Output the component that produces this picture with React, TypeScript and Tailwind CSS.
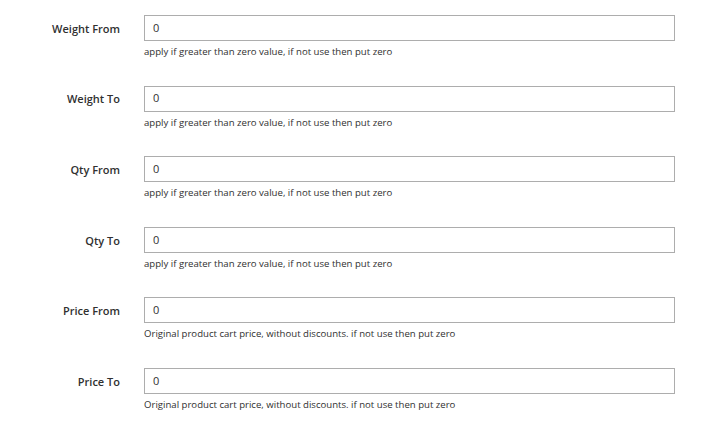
import React from "react";

const rows = [
  { label: "Weight From", note: "apply if greater than zero value, if not use then put zero" },
  { label: "Weight To", note: "apply if greater than zero value, if not use then put zero" },
  { label: "Qty From", note: "apply if greater than zero value, if not use then put zero" },
  { label: "Qty To", note: "apply if greater than zero value, if not use then put zero" },
  { label: "Price From", note: "Original product cart price, without discounts. if not use then put zero" },
  { label: "Price To", note: "Original product cart price, without discounts. if not use then put zero" },
];

export default function App() {
  return (
    <div
      className="w-[718px] h-[435px] bg-white pt-[15px] overflow-hidden"
      style={{ fontFamily: '"Open Sans", "Noto Sans", sans-serif' }}
    >
      {rows.map((r) => (
        <div key={r.label} className="flex h-[70.6px]">
          <div className="w-[120px] h-[26px] pt-[2px] flex items-center justify-end text-[11px] font-semibold text-[#303030]">
            {r.label}
          </div>
          <div className="ml-[24px] flex flex-col">
            <div className="w-[531px] h-[26px] border border-[#adadad] flex items-center pl-[8px] text-[11px] text-[#303030]">
              0
            </div>
            <div className="mt-[4px] text-[9.6px] leading-[13px] text-[#303030]">{r.note}</div>
          </div>
        </div>
      ))}
    </div>
  );
}
